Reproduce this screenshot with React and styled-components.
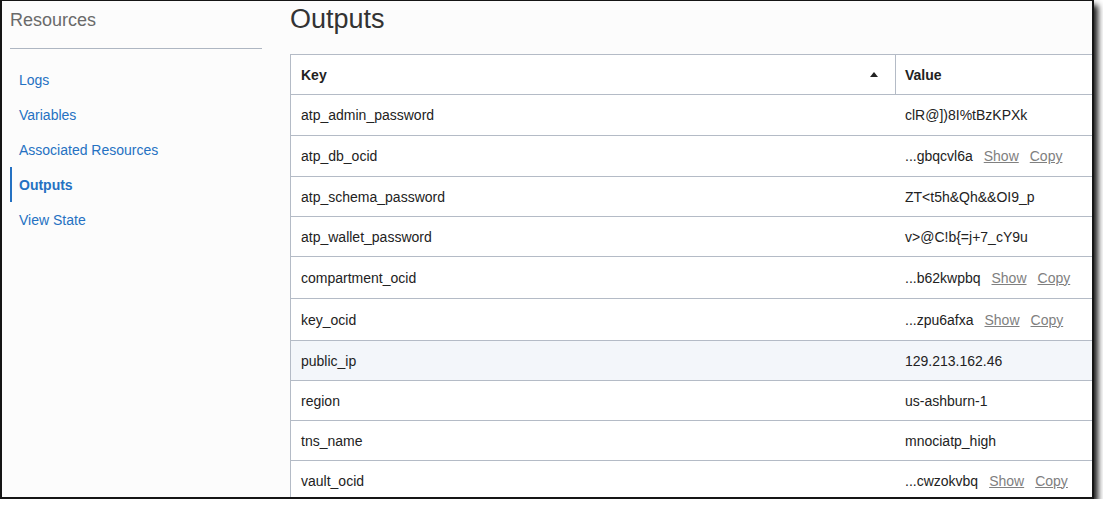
import React from "react"
import styled, { createGlobalStyle } from "styled-components"

const GlobalStyle = createGlobalStyle`
    body {
        margin: 0;
        background: #fff;
        font-family: "Liberation Sans", Arial, sans-serif;
    }
`

const Frame = styled.div`
    box-sizing: border-box;
    width: 1094px;
    height: 499px;
    border: 2px solid #151515;
    border-top-width: 1px;
    background: #fcfcfc;
    box-shadow: 4px 5px 6px rgba(0, 0, 0, 0.9);
    display: flex;
    overflow: hidden;
`

const Sidebar = styled.aside`
    flex: none;
    width: 252px;
    padding: 8px 0 0 8px;
`

const SideTitle = styled.div`
    font-size: 18px;
    line-height: 22px;
    color: #6a6a6a;
    padding-bottom: 17px;
    border-bottom: 1px solid #aeb6c2;
`

const Nav = styled.nav`
    display: flex;
    flex-direction: column;
    margin-top: 13px;
`

const NavItem = styled.a`
    display: flex;
    align-items: center;
    height: 35px;
    padding-left: 7px;
    font-size: 14px;
    color: #2571c2;
    text-decoration: none;
    cursor: pointer;
    font-weight: ${({ active }) => active ? 700 : 400};
    border-left: 2px solid ${({ active }) => active ? "#2571c2" : "transparent"};
`

const Main = styled.main`
    flex: 1;
    min-width: 0;
    padding: 2px 0 0 28px;
`

const Heading = styled.h1`
    margin: 0 0 19px;
    font-size: 27px;
    line-height: 32px;
    font-weight: 400;
    color: #333;
`

const Table = styled.div`
    width: 900px;
    background: #fff;
    border: 1px solid #b4bbc6;
    border-bottom: none;
    font-size: 14px;
    color: #222;
`

const Row = styled.div`
    box-sizing: border-box;
    display: grid;
    grid-template-columns: 604px 1fr;
    height: ${({ h }) => h}px;
    border-bottom: 1px solid #b4bbc6;
    background: ${({ hover }) => hover ? "#f3f6fa" : "#fff"};
`

const Cell = styled.div`
    display: flex;
    align-items: center;
    padding-left: 10px;
    white-space: nowrap;
`

const HeadCell = styled(Cell)`
    font-weight: 700;
    justify-content: space-between;
    padding-right: 17px;
    & + & {
        border-left: 1px solid #b4bbc6;
        padding-left: 9px;
    }
`

const ValueCell = styled(Cell)`
    padding-left: 10px;
`

const SortUp = styled.span`
    width: 0;
    height: 0;
    border-left: 4.5px solid transparent;
    border-right: 4.5px solid transparent;
    border-bottom: 5px solid #222;
`

const LinkBtn = styled.a`
    margin-left: 11px;
    color: #808080;
    text-decoration: underline;
    cursor: pointer;
`

const outputs = [
    { key: "atp_admin_password", value: "clR@])8I%tBzKPXk", h: 41 },
    { key: "atp_db_ocid", value: "...gbqcvl6a", secret: true, h: 41 },
    { key: "atp_schema_password", value: "ZT<t5h&Qh&&OI9_p", h: 40 },
    { key: "atp_wallet_password", value: "v>@C!b{=j+7_cY9u", h: 40 },
    { key: "compartment_ocid", value: "...b62kwpbq", secret: true, h: 42 },
    { key: "key_ocid", value: "...zpu6afxa", secret: true, h: 42 },
    { key: "public_ip", value: "129.213.162.46", h: 40, hover: true },
    { key: "region", value: "us-ashburn-1", h: 40 },
    { key: "tns_name", value: "mnociatp_high", h: 40 },
    { key: "vault_ocid", value: "...cwzokvbq", secret: true, h: 40 },
]

const navItems = ["Logs", "Variables", "Associated Resources", "Outputs", "View State"]

const App = () => {
    return <>
        <GlobalStyle />
        <Frame>
            <Sidebar>
                <SideTitle>Resources</SideTitle>
                <Nav>
                    {navItems.map(n => <NavItem key={n} active={n === "Outputs"}>{n}</NavItem>)}
                </Nav>
            </Sidebar>
            <Main>
                <Heading>Outputs</Heading>
                <Table>
                    <Row h={40}>
                        <HeadCell>Key<SortUp /></HeadCell>
                        <HeadCell>Value</HeadCell>
                    </Row>
                    {outputs.map(o => <Row key={o.key} h={o.h} hover={o.hover}>
                        <Cell>{o.key}</Cell>
                        <ValueCell>
                            {o.value}
                            {o.secret && <><LinkBtn>Show</LinkBtn><LinkBtn>Copy</LinkBtn></>}
                        </ValueCell>
                    </Row>)}
                </Table>
            </Main>
        </Frame>
    </>
}

export default App
